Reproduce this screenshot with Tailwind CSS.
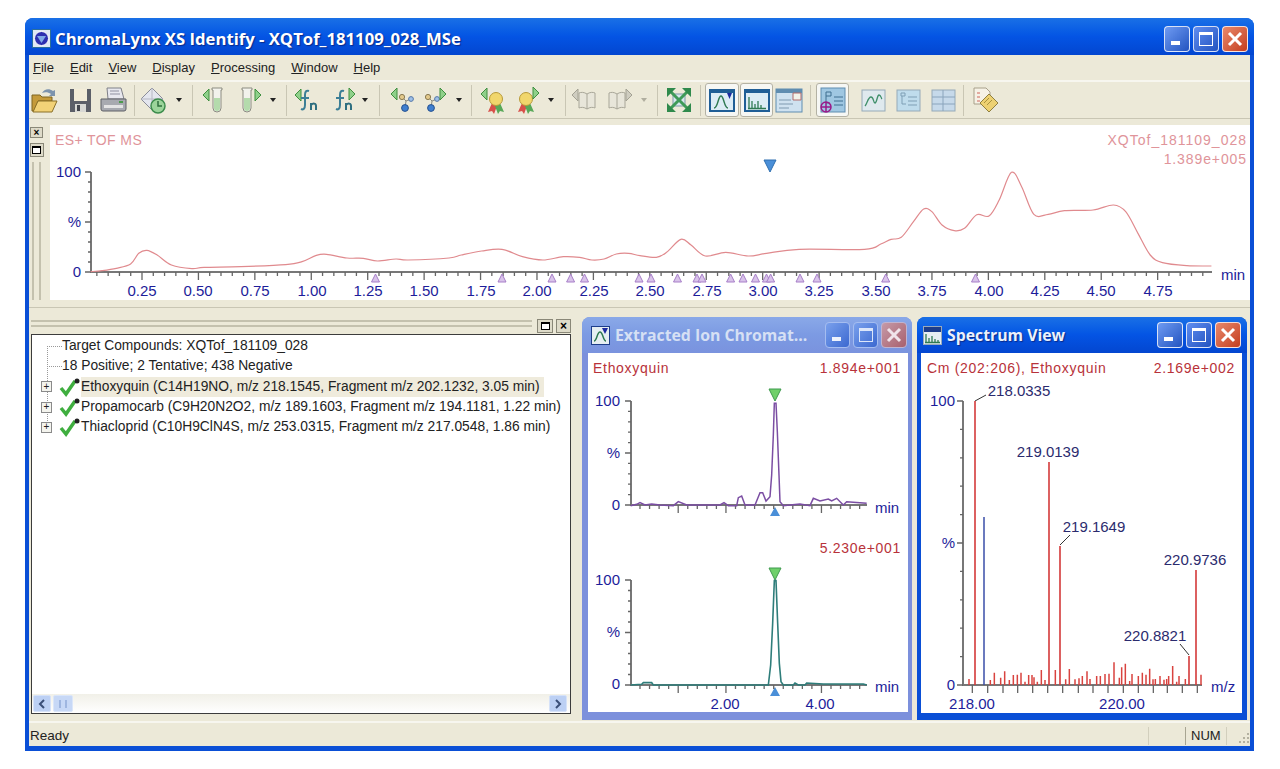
<!DOCTYPE html>
<html lang="en">
<head>
  <meta charset="UTF-8" />
  <title>ChromaLynx XS Identify</title>
  <script src="https://cdn.jsdelivr.net/npm/@tailwindcss/browser@4"></script>
</head>
<body class="bg-white font-['Liberation_Sans',sans-serif] overflow-hidden">
  <svg width="0" height="0" class="absolute">
    <defs>
      <symbol id="tri-l" viewBox="0 0 8 14"><path d="M7 1 1 7l6 6z" fill="#8fd08a" stroke="#3f8f3f"/></symbol>
      <symbol id="tri-r" viewBox="0 0 8 14"><path d="M1 1l6 6-6 6z" fill="#8fd08a" stroke="#3f8f3f"/></symbol>
      <symbol id="tri-g" viewBox="0 0 8 14"><path d="M7 1 1 7l6 6z" fill="#cfcdc0" stroke="#a3a193"/></symbol>
      <symbol id="vial" viewBox="0 0 14 26"><path d="M2 1h10v2h-1v18a4 4 0 0 1-8 0V3H2z" fill="#f2f2ec" stroke="#8b8b80"/><path d="M4 11h6v10a3 3 0 0 1-6 0z" fill="#b4dbac"/></symbol>
      <symbol id="mol" viewBox="0 0 18 20"><path d="M5 5 9 9l5-2M9 9l-1 7" stroke="#8a8a80" fill="none"/><circle cx="5" cy="5" r="2.6" fill="#e3c98b" stroke="#8a7a50"/><circle cx="14" cy="7" r="2.4" fill="#9fc0e8" stroke="#5578a8"/><circle cx="8" cy="16" r="3.4" fill="#3f7fd0" stroke="#27528f"/></symbol>
      <symbol id="award" viewBox="0 0 20 24"><path d="M6 12 2 21l4-1 2 3 3-8z" fill="#d8504a"/><path d="M14 12l4 9-4-1-2 3-3-8z" fill="#58a858"/><circle cx="10" cy="8" r="6.5" fill="#f1d66c" stroke="#b89a3a"/></symbol>
      <symbol id="book" viewBox="0 0 20 22"><path d="M10 4C7 2 4 2 2 3v15c2-1 5-1 8 1 3-2 6-2 8-1V3c-2-1-5-1-8 1z" fill="#e8e6da" stroke="#a8a698"/><path d="M10 4v15" stroke="#a8a698"/></symbol>
    </defs>
  </svg>

  <div class="ml-[25px] mt-[18px] w-[1229px] h-[733px] flex flex-col rounded-t-lg bg-[#0a4fd6] overflow-hidden">
    <!-- title bar -->
    <div class="h-[37px] shrink-0 flex items-center pt-[4px] pl-[7px] pr-[6px] bg-linear-to-b from-[#1a70e6] via-[#0454e4] to-[#0346d0]">
      <svg class="w-[19px] h-[19px] shrink-0" viewBox="0 0 19 19"><rect x=".5" y=".5" width="18" height="18" fill="#dfe8f4" stroke="#2c6f9a"/><circle cx="9.5" cy="9.5" r="7" fill="#2d2fb0" stroke="#fff"/><path d="M5 7h9l-4.500 7z" fill="#7fa8e8"/></svg>
      <span class="ml-[4px] text-white font-bold text-[16.700px] font-['Open_Sans',sans-serif] whitespace-nowrap [text-shadow:1px_1px_1px_#0a2a8a]">ChromaLynx XS Identify - XQTof_181109_028_MSe</span>
      <div class="ml-auto flex gap-[3px]">
        <div class="w-[26px] h-[26px] rounded-[4px] border border-white/80 bg-linear-to-br from-[#6f9bf2] to-[#2353c0] flex items-end pl-[6px] pb-[6px]"><div class="w-[9px] h-[4px] bg-white"></div></div>
        <div class="w-[26px] h-[26px] rounded-[4px] border border-white/80 bg-linear-to-br from-[#5f8df0] to-[#2353c0] flex items-center justify-center"><div class="w-[14px] h-[14px] border border-white border-t-[3px]"></div></div>
        <div class="w-[26px] h-[26px] rounded-[4px] border border-white/80 bg-linear-to-br from-[#e8886a] to-[#c43c1c] flex items-center justify-center text-white"><svg class="w-[16px] h-[16px]" viewBox="0 0 16 16"><path d="M2 2l12 12M14 2 2 14" stroke="#fff" stroke-width="3"/></svg></div>
      </div>
    </div>

    <div class="mx-[4px] flex-1 flex flex-col bg-[#ece9d8] text-black min-h-0">
      <!-- menu -->
      <div class="h-[27px] shrink-0 flex items-center pt-[1px] pl-[4px] gap-[16px] text-[13px] text-[#222] border-b-2 border-[#f7f6ef]">
        <span><u>F</u>ile</span><span><u>E</u>dit</span><span><u>V</u>iew</span><span><u>D</u>isplay</span><span><u>P</u>rocessing</span><span><u>W</u>indow</span><span><u>H</u>elp</span>
      </div>

      <!-- toolbar -->
      <div class="h-[37px] shrink-0 flex items-center border-b border-[#c9c6b4]">
        <svg class="w-[30px] h-[30px]" viewBox="0 0 30 30"><path d="M3 10h8l2 2h10v4H9l-4 10H3z" fill="#c49a3a" stroke="#7f6420"/><path d="M9 16h19l-5 11H4z" fill="#f2d277" stroke="#8a7028"/><path d="M13 8c2-4 7-5 11-2l2-1v6h-6l2-2c-3-2-6-2-9-1z" fill="#7c93ad"/></svg>
        <svg class="ml-[6px] w-[30px] h-[30px]" viewBox="0 0 30 30"><rect x="5" y="4" width="21" height="23" fill="#5c5f68"/><rect x="9" y="4" width="13" height="12" fill="#f3ecd8"/><rect x="10" y="19" width="11" height="8" fill="#d8d8d4"/><rect x="12" y="20" width="3" height="6" fill="#44464e"/></svg>
        <svg class="ml-[3px] w-[30px] h-[30px]" viewBox="0 0 30 30"><path d="M9 3h14l3 11H10z" fill="#e8e8ee" stroke="#7f8088"/><path d="M12 6h9M12 9h10" stroke="#8f90a0"/><path d="M3 14h25v10a2 2 0 0 1-2 2H5a2 2 0 0 1-2-2z" fill="#a8aab0" stroke="#5f6066"/><rect x="6" y="20" width="19" height="3" fill="#e4e4e4"/><rect x="21" y="16" width="4" height="2" fill="#4c9a4c"/></svg>
        <div class="ml-[6px] w-px h-[31px] bg-[#c9c6b4]"></div>
        <svg class="ml-[4px] w-[30px] h-[30px]" viewBox="0 0 30 30"><path d="M13 3 2 14l11 11 11-11z" fill="#e4e6ee" stroke="#8a8c98"/><path d="M13 3v22M2 14h22" stroke="#b6b8c4"/><circle cx="19" cy="21" r="7" fill="#9bd49a" stroke="#3c8c4c" stroke-width="1.500"/><path d="M19 16v5h4" stroke="#2f6f3c" fill="none" stroke-width="1.500"/></svg>
        <svg class="ml-[6px] w-[8px] h-[5px]" viewBox="0 0 8 5"><path d="M1 0h6L4 4z" fill="#222"/></svg>
        <div class="ml-[9px] w-px h-[31px] bg-[#c9c6b4]"></div>
        <svg class="ml-[6px] w-[30px] h-[30px]" viewBox="0 0 30 30"><use href="#tri-l" x="3" y="3" width="8" height="14"/><use href="#vial" x="11" y="2" width="14" height="26"/></svg>
        <svg class="ml-[6px] w-[30px] h-[30px]" viewBox="0 0 30 30"><use href="#vial" x="5" y="2" width="14" height="26"/><use href="#tri-r" x="19" y="3" width="8" height="14"/></svg>
        <svg class="ml-[4px] w-[8px] h-[5px]" viewBox="0 0 8 5"><path d="M1 0h6L4 4z" fill="#222"/></svg>
        <div class="ml-[9px] w-px h-[31px] bg-[#c9c6b4]"></div>
        <svg class="ml-[4px] w-[30px] h-[30px]" viewBox="0 0 30 30"><use href="#tri-l" x="3" y="3" width="8" height="14"/><path d="M18 6c-3-1-4 1-4 4v10c0 4-2 5-4 4M10 13h8" fill="none" stroke="#3c7f96" stroke-width="2"/><path d="M20 25v-7m0 2c2-2 5-2 5 1v4" fill="none" stroke="#2f6f80" stroke-width="2"/></svg>
        <svg class="ml-[9px] w-[30px] h-[30px]" viewBox="0 0 30 30"><path d="M14 6c-3-1-4 1-4 4v10c0 4-2 5-4 4M6 13h8" fill="none" stroke="#3c7f96" stroke-width="2"/><path d="M16 25v-7m0 2c2-2 5-2 5 1v4" fill="none" stroke="#2f6f80" stroke-width="2"/><use href="#tri-r" x="18" y="2" width="8" height="14"/></svg>
        <svg class="ml-[1px] w-[8px] h-[5px]" viewBox="0 0 8 5"><path d="M1 0h6L4 4z" fill="#222"/></svg>
        <div class="ml-[10px] w-px h-[31px] bg-[#c9c6b4]"></div>
        <svg class="ml-[7px] w-[30px] h-[30px]" viewBox="0 0 30 30"><use href="#tri-l" x="3" y="2" width="8" height="14"/><use href="#mol" x="10" y="7" width="18" height="20"/></svg>
        <svg class="ml-[3px] w-[30px] h-[30px]" viewBox="0 0 30 30"><use href="#mol" x="3" y="7" width="18" height="20"/><use href="#tri-r" x="19" y="2" width="8" height="14"/></svg>
        <svg class="ml-[5px] w-[8px] h-[5px]" viewBox="0 0 8 5"><path d="M1 0h6L4 4z" fill="#222"/></svg>
        <div class="ml-[8px] w-px h-[31px] bg-[#c9c6b4]"></div>
        <svg class="ml-[5px] w-[30px] h-[30px]" viewBox="0 0 30 30"><use href="#tri-l" x="3" y="2" width="8" height="14"/><use href="#award" x="9" y="6" width="20" height="24"/></svg>
        <svg class="ml-[7px] w-[30px] h-[30px]" viewBox="0 0 30 30"><use href="#award" x="2" y="6" width="20" height="24"/><use href="#tri-r" x="18" y="1" width="8" height="14"/></svg>
        <svg class="ml-[3px] w-[8px] h-[5px]" viewBox="0 0 8 5"><path d="M1 0h6L4 4z" fill="#222"/></svg>
        <div class="ml-[10px] w-px h-[31px] bg-[#c9c6b4]"></div>
        <svg class="ml-[3px] w-[30px] h-[30px]" viewBox="0 0 30 30"><use href="#tri-g" x="2" y="3" width="8" height="14"/><use href="#book" x="8" y="5" width="20" height="22"/></svg>
        <svg class="ml-[6px] w-[30px] h-[30px]" viewBox="0 0 30 30"><use href="#book" x="2" y="5" width="20" height="22"/><use href="#tri-g" x="20" y="3" width="8" height="14" transform="matrix(-1 0 0 1 48 0)"/></svg>
        <svg class="ml-[5px] w-[8px] h-[5px]" viewBox="0 0 8 5"><path d="M1 0h6L4 4z" fill="#b0ae9f"/></svg>
        <div class="ml-[9px] w-px h-[31px] bg-[#c9c6b4]"></div>
        <svg class="ml-[6px] w-[30px] h-[30px]" viewBox="0 0 30 30"><rect x="9" y="9" width="12" height="12" fill="#d7e6ee" stroke="#7f9aa8"/><path d="M4 4l22 22M26 4 4 26" stroke="#3f9a58" stroke-width="3"/><path d="M3 3h9l-9 9zM27 3h-9l9 9zM3 27h9l-9-9zM27 27h-9l9-9z" fill="#2f8a4c"/></svg>
        <div class="ml-[6px] w-px h-[31px] bg-[#c9c6b4]"></div>
        <div class="ml-[4px] w-[34px] h-[34px] rounded-[3px] border border-[#b4b2a4] bg-[#f6f7f4] flex items-center justify-center">
          <svg class="w-[26px] h-[23px]" viewBox="0 0 26 23"><rect width="26" height="23" fill="#1f5e96"/><rect x="2" y="4" width="22" height="17" fill="#dcecf5"/><path d="M5 19c4 0 4-12 7-12s3 12 7 12" fill="none" stroke="#2f7a52" stroke-width="1.500"/><path d="M18 4h5l-2.500 6z" fill="#1d2aa0"/></svg>
        </div>
        <div class="ml-[1px] w-[33px] h-[34px] rounded-[3px] border border-[#b4b2a4] bg-[#f6f7f4] flex items-center justify-center">
          <svg class="w-[26px] h-[23px]" viewBox="0 0 26 23"><rect width="26" height="23" fill="#1f5e96"/><rect x="2" y="4" width="22" height="17" fill="#dcecf5"/><path d="M5 19V8M8 19v-7M11 19v-4M14 19v-7M17 19v-3M4 19.500h18" stroke="#2f7a52" stroke-width="1.300"/></svg>
        </div>
        <svg class="ml-[1px] w-[30px] h-[30px]" viewBox="0 0 30 30"><rect x="2" y="4" width="26" height="23" fill="#cfe2f0" stroke="#5f8db0"/><rect x="2" y="4" width="26" height="4" fill="#5f8db0"/><path d="M5 15h12M5 19h14M5 23h10" stroke="#7f9ab0"/><path d="M19 8h8v7h-8z" fill="#f2f2ea" stroke="#b06a6a"/></svg>
        <div class="ml-[6px] w-px h-[31px] bg-[#c9c6b4]"></div>
        <div class="ml-[5px] w-[33px] h-[34px] rounded-[3px] border border-[#b4b2a4] bg-[#f6f7f4] flex items-center justify-center">
          <svg class="w-[26px] h-[26px]" viewBox="0 0 26 26"><rect x="1" y="1" width="24" height="24" fill="#9fc7e2" stroke="#5f8db0"/><path d="M6 5h5v4H6zM6 9v7h4M14 10h9M14 14h9M14 18h9" fill="none" stroke="#3f6f90"/><circle cx="6" cy="20" r="5" fill="none" stroke="#9a1a8a" stroke-width="1.500"/><path d="M1 20h10M6 15v10" stroke="#9a1a8a" stroke-width="1.500"/></svg>
        </div>
        <svg class="ml-[9px] w-[30px] h-[30px]" viewBox="0 0 30 30"><rect x="4" y="5" width="23" height="21" fill="#dfe9ee" stroke="#95aab8"/><path d="M7 21c2-2 3-9 6-9s2 6 4 6 2-8 4-8 2 3 3 4" fill="none" stroke="#3f8f6a" stroke-width="1.300"/></svg>
        <svg class="ml-[5px] w-[30px] h-[30px]" viewBox="0 0 30 30"><rect x="4" y="5" width="23" height="21" fill="#bfdcec" stroke="#95aab8"/><path d="M8 8h4v3H8zM9 11v8h4M15 12h9M15 16h9M15 20h9" fill="none" stroke="#7f9fb5"/></svg>
        <svg class="ml-[5px] w-[30px] h-[30px]" viewBox="0 0 30 30"><rect x="4" y="5" width="23" height="21" fill="#c6d9ea" stroke="#95aab8"/><path d="M4 12h23M4 19h23M15 5v21" stroke="#8aa4bc"/></svg>
        <div class="ml-[5px] w-px h-[31px] bg-[#c9c6b4]"></div>
        <svg class="ml-[6px] w-[30px] h-[30px]" viewBox="0 0 30 30"><path d="M4 3h12l4 4v12H4z" fill="#f6f2e6" stroke="#a8a08a"/><path d="M7 8h3M7 12h3M7 16h3" stroke="#d0645a"/><path d="M10 18 19 9l9 9-9 9z" fill="#edd172" stroke="#8f7f3f"/><path d="M14 18l5-5M17 20l5-5" stroke="#a8923f"/></svg>
      </div>

      <!-- total ion chromatogram -->
      <div class="h-[181px] shrink-0 flex pt-[6px]">
        <div class="w-[21px] flex flex-col items-center pr-[6px] pt-[2px]">
          <div class="w-[13px] h-[11px] border border-[#8a8878] bg-[#dedbc9] flex items-center justify-center text-[10px] leading-none font-bold">×</div>
          <div class="mt-[5px] w-[14px] h-[14px] border border-[#8a8878] bg-[#dedbc9] flex items-center justify-center"><div class="w-[9px] h-[8px] border border-black border-t-2 bg-white"></div></div>
          <div class="mt-[5px] w-[9px] flex-1 border-x-2 border-[#c4c1ae]"></div>
        </div>
        <svg id="top" class="w-[1200px] h-[175px] bg-white" viewBox="50 125 1200 175">
          <g class="text-[14px] fill-[#e0949a]">
            <text x="55" y="145" class="tracking-[0.4px]">ES+ TOF MS</text>
            <text x="1247" y="145" text-anchor="end" class="tracking-[1px]">XQTof_181109_028</text>
            <text x="1247" y="164" text-anchor="end" class="tracking-[0.9px]">1.389e+005</text>
          </g>
          <path d="M764 160h12l-6 12z" fill="#4a8fd8" stroke="#2f6fb0"/>
          <g class="text-[15px] fill-[#1d1d9a]" text-anchor="middle">
            <text x="81" y="177" text-anchor="end">100</text><text x="81" y="227" text-anchor="end">%</text><text x="81" y="277" text-anchor="end">0</text>
            <text x="142" y="296">0.25</text><text x="198" y="296">0.50</text><text x="255" y="296">0.75</text><text x="312" y="296">1.00</text><text x="368" y="296">1.25</text><text x="424" y="296">1.50</text><text x="481" y="296">1.75</text><text x="537" y="296">2.00</text><text x="594" y="296">2.25</text><text x="650" y="296">2.50</text><text x="707" y="296">2.75</text><text x="763" y="296">3.00</text><text x="819" y="296">3.25</text><text x="876" y="296">3.50</text><text x="932" y="296">3.75</text><text x="989" y="296">4.00</text><text x="1045" y="296">4.25</text><text x="1101" y="296">4.50</text><text x="1158" y="296">4.75</text>
            <text x="1233" y="280">min</text>
          </g>
        </svg>
      </div>
      <div class="h-[8px] shrink-0 border-b border-[#c9c6b4]"></div>

      <!-- lower row -->
      <div class="h-[413px] shrink-0 flex">
        <div class="w-[553px] shrink-0 flex flex-col pl-[2px] pr-[11px]">
          <div class="h-[26px] shrink-0 flex items-end gap-[3px] pb-[1px]">
            <div class="flex-1 h-[7px] mb-[6px] border-y-2 border-[#c4c1ae]"></div>
            <div class="ml-[2px] w-[16px] h-[14px] border border-[#8a8878] bg-[#dedbc9] flex items-center justify-center"><div class="w-[9px] h-[8px] border border-black border-t-2 bg-white"></div></div>
            <div class="w-[15px] h-[14px] border border-[#8a8878] bg-[#dedbc9] flex items-center justify-center text-[12px] leading-none font-bold">×</div>
          </div>
          <div class="h-[380px] shrink-0 flex flex-col border border-[#3c3c3c] bg-white">
            <div class="relative flex-1 pt-[1px] text-[13.800px] text-[#222] whitespace-nowrap">
              <div class="absolute left-[15px] top-[11px] h-[81px] border-l border-dotted border-[#999]"></div>
              <div class="h-[20px] flex items-center"><div class="ml-[15px] w-[15px] border-t border-dotted border-[#999]"></div><span>Target Compounds: XQTof_181109_028</span></div>
              <div class="h-[20px] flex items-center"><div class="ml-[15px] w-[15px] border-t border-dotted border-[#999]"></div><span>18 Positive; 2 Tentative; 438 Negative</span></div>
              <div class="h-[21px] flex items-center pl-[9px]">
                <div class="relative w-[11px] h-[11px] border border-[#8a8a8a] flex items-center justify-center bg-[#f4f4ee] text-[10px] leading-none">+</div>
                <svg class="ml-[7px] w-[22px] h-[20px] shrink-0" viewBox="0 0 22 20"><path d="M2 11l5 6L16 4" fill="none" stroke="#3fae3f" stroke-width="3.500"/><circle cx="18" cy="4" r="2.500" fill="#222"/></svg>
                <span class="bg-[#efebdc] h-[20px] leading-[20px] pr-[4px]">Ethoxyquin (C14H19NO, m/z 218.1545, Fragment m/z 202.1232, 3.05 min)</span>
              </div>
              <div class="h-[20px] flex items-center pl-[9px]">
                <div class="relative w-[11px] h-[11px] border border-[#8a8a8a] flex items-center justify-center bg-[#f4f4ee] text-[10px] leading-none">+</div>
                <svg class="ml-[7px] w-[22px] h-[20px] shrink-0" viewBox="0 0 22 20"><path d="M2 11l5 6L16 4" fill="none" stroke="#3fae3f" stroke-width="3.500"/><circle cx="18" cy="4" r="2.500" fill="#222"/></svg>
                <span>Propamocarb (C9H20N2O2, m/z 189.1603, Fragment m/z 194.1181, 1.22 min)</span>
              </div>
              <div class="h-[20px] flex items-center pl-[9px]">
                <div class="relative w-[11px] h-[11px] border border-[#8a8a8a] flex items-center justify-center bg-[#f4f4ee] text-[10px] leading-none">+</div>
                <svg class="ml-[7px] w-[22px] h-[20px] shrink-0" viewBox="0 0 22 20"><path d="M2 11l5 6L16 4" fill="none" stroke="#3fae3f" stroke-width="3.500"/><circle cx="18" cy="4" r="2.500" fill="#222"/></svg>
                <span>Thiacloprid (C10H9ClN4S, m/z 253.0315, Fragment m/z 217.0548, 1.86 min)</span>
              </div>
            </div>
            <!-- scrollbar -->
            <div class="h-[19px] shrink-0 flex items-center pl-[1px] pr-[3px] gap-[2px] bg-linear-to-b from-[#f1f0e8] to-white">
              <div class="w-[18px] h-[17px] rounded-[2px] bg-[#bcd0f4] border border-[#d6e2f8] flex items-center justify-center"><svg class="w-[8px] h-[10px]" viewBox="0 0 8 10"><path d="M6 1 2 5l4 4" fill="none" stroke="#3a4f78" stroke-width="2"/></svg></div>
              <div class="w-[20px] h-[17px] rounded-[2px] bg-[#c7d8f6] border border-[#dbe6f9] flex items-center justify-center"><div class="w-[8px] h-[8px] border-x-2 border-[#9fb6e0]"></div></div>
              <div class="ml-auto w-[18px] h-[17px] rounded-[2px] bg-[#bcd0f4] border border-[#d6e2f8] flex items-center justify-center"><svg class="w-[8px] h-[10px]" viewBox="0 0 8 10"><path d="M2 1l4 4-4 4" fill="none" stroke="#3a4f78" stroke-width="2"/></svg></div>
            </div>
          </div>
        </div>

        <!-- extracted ion chromatogram window -->
        <div class="mt-[9px] w-[330px] h-[403px] shrink-0 flex flex-col rounded-t-lg bg-[#7c90dc] overflow-hidden">
          <div class="h-[36px] shrink-0 flex items-center pl-[9px] pr-[5px] bg-linear-to-b from-[#8aa9e8] via-[#7c9ae3] to-[#7a93de]">
            <svg class="w-[19px] h-[19px] shrink-0" viewBox="0 0 19 19"><rect x=".5" y=".5" width="18" height="18" fill="#e6eef2" stroke="#1d3d8a"/><path d="M3 15c3 0 3-9 6-9s3 9 6 9" fill="none" stroke="#2f7a52" stroke-width="1.500"/><path d="M11 2h6l-3 6z" fill="#1d2aa0"/></svg>
            <span class="ml-[5px] mt-[2px] text-[#d6e0f4] font-bold text-[15.800px] font-['Open_Sans',sans-serif] whitespace-nowrap">Extracted Ion Chromat...</span>
            <div class="ml-auto flex gap-[3px]">
              <div class="w-[25px] h-[26px] rounded-[4px] border border-[#a5bdf0] bg-linear-to-br from-[#7aa0ec] to-[#3c68d0] flex items-end pl-[6px] pb-[6px]"><div class="w-[9px] h-[4px] bg-white/90"></div></div>
              <div class="w-[25px] h-[26px] rounded-[4px] border border-[#a5bdf0] bg-linear-to-br from-[#7aa0ec] to-[#3c68d0] flex items-center justify-center"><div class="w-[14px] h-[14px] border border-[#dce6fa] border-t-[3px]"></div></div>
              <div class="w-[26px] h-[26px] rounded-[4px] border border-[#c0b4d0] bg-linear-to-br from-[#c59aa8] to-[#a8606e] flex items-center justify-center"><svg class="w-[16px] h-[16px]" viewBox="0 0 16 16"><path d="M2 2l12 12M14 2 2 14" stroke="#f0e4ea" stroke-width="3"/></svg></div>
            </div>
          </div>
          <svg id="xic" class="ml-[6px] w-[320px] h-[359px] bg-white" viewBox="588 353 320 359">
            <g class="text-[14px] fill-[#b8323a] tracking-[0.7px]">
              <text x="593" y="373">Ethoxyquin</text>
              <text x="901" y="373" text-anchor="end">1.894e+001</text>
              <text x="901" y="553" text-anchor="end">5.230e+001</text>
            </g>
            <g class="text-[15px] fill-[#1d1d9a]">
              <text x="620" y="406" text-anchor="end">100</text><text x="620" y="458" text-anchor="end">%</text><text x="620" y="510" text-anchor="end">0</text>
              <text x="875" y="513">min</text>
              <text x="620" y="585" text-anchor="end">100</text><text x="620" y="637" text-anchor="end">%</text><text x="620" y="689" text-anchor="end">0</text>
              <text x="875" y="692">min</text>
              <text x="725" y="709" text-anchor="middle">2.00</text><text x="820" y="709" text-anchor="middle">4.00</text>
            </g>
            <path d="M769 389h12l-6 12z" fill="#6fd06a" stroke="#3f9a4f"/>
            <path d="M769 568h12l-6 12z" fill="#6fd06a" stroke="#3f9a4f"/>
            <path d="M770 516h10l-5-9z" fill="#4a8fd8"/>
            <path d="M770 696h10l-5-9z" fill="#4a8fd8"/>
          </svg>
        </div>

        <!-- spectrum window -->
        <div class="ml-[5px] mt-[9px] w-[330px] h-[403px] shrink-0 flex flex-col rounded-t-lg bg-[#0a4fd6] overflow-hidden">
          <div class="h-[36px] shrink-0 flex items-center pl-[6px] pr-[6px] bg-linear-to-b from-[#1a70e6] via-[#0454e4] to-[#0346d0]">
            <svg class="w-[19px] h-[19px] shrink-0" viewBox="0 0 19 19"><rect x=".5" y=".5" width="18" height="18" fill="#e6eef2" stroke="#9ab"/><rect x="1" y="1" width="17" height="5" fill="#1d3d8a"/><path d="M3 16V8M6 16v-4M9 16v-6M12 16v-3M15 16v-2M2 16.500h15" stroke="#2f7a52" stroke-width="1.300"/></svg>
            <span class="ml-[5px] mt-[2px] text-[#eaf1fc] font-bold text-[15.800px] font-['Open_Sans',sans-serif] whitespace-nowrap [text-shadow:1px_1px_1px_#0a2a8a]">Spectrum View</span>
            <div class="ml-auto flex gap-[3px]">
              <div class="w-[26px] h-[26px] rounded-[4px] border border-white/80 bg-linear-to-br from-[#6f9bf2] to-[#2353c0] flex items-end pl-[6px] pb-[6px]"><div class="w-[9px] h-[4px] bg-white"></div></div>
              <div class="w-[26px] h-[26px] rounded-[4px] border border-white/80 bg-linear-to-br from-[#5f8df0] to-[#2353c0] flex items-center justify-center"><div class="w-[14px] h-[14px] border border-white border-t-[3px]"></div></div>
              <div class="w-[26px] h-[26px] rounded-[4px] border border-white/80 bg-linear-to-br from-[#e8886a] to-[#c43c1c] flex items-center justify-center"><svg class="w-[16px] h-[16px]" viewBox="0 0 16 16"><path d="M2 2l12 12M14 2 2 14" stroke="#fff" stroke-width="3"/></svg></div>
            </div>
          </div>
          <svg id="spec" class="ml-[4px] w-[321px] h-[360px] bg-white" viewBox="921 353 321 360">
            <g class="text-[14px] fill-[#b8323a] tracking-[0.7px]">
              <text x="927" y="373">Cm (202:206), Ethoxyquin</text>
              <text x="1235" y="373" text-anchor="end">2.169e+002</text>
            </g>
            <g class="text-[15px] fill-[#2b2b6e]" text-anchor="middle">
              <text x="1019" y="396">218.0335</text><text x="1048" y="457">219.0139</text><text x="1094" y="532">219.1649</text><text x="1195" y="565">220.9736</text><text x="1155" y="641">220.8821</text>
            </g>
            <g class="text-[15px] fill-[#1d1d9a]">
              <text x="955" y="406" text-anchor="end">100</text><text x="955" y="548" text-anchor="end">%</text><text x="955" y="690" text-anchor="end">0</text>
              <text x="1211" y="692">m/z</text>
              <text x="972" y="709" text-anchor="middle">218.00</text><text x="1122" y="709" text-anchor="middle">220.00</text>
            </g>
            <path d="M975 401l11-6M1060 545l10-10M1180 644l9 11" stroke="#333" fill="none"/>
          </svg>
        </div>
      </div>

      <!-- status bar -->
      <div class="flex-1 flex items-center pl-[1px] pt-[3px] text-[13.500px] text-[#222] border-t-2 border-[#f7f6ef] min-h-0">
        <span>Ready</span>
        <div class="ml-auto w-px h-[18px] bg-[#d2cfbd]"></div>
        <div class="ml-[36px] w-px h-[18px] bg-[#a8a592]"></div>
        <span class="ml-[5px] w-[35px] text-[13px]">NUM</span>
        <div class="w-px h-[18px] bg-[#d2cfbd]"></div>
        <svg class="ml-[9px] w-[14px] h-[14px] mt-[4px]" viewBox="0 0 14 14"><path d="M11 2h2v2h-2zM7 6h2v2H7zM11 6h2v2h-2zM3 10h2v2H3zM7 10h2v2H7zM11 10h2v2h-2z" fill="#b4b1a0"/></svg>
      </div>
    </div>
    <div class="h-[5px] shrink-0"></div>
  </div>

  <script>
    // chart strokes: traces read off the plots, ticks from the axis ranges
    const NS = "http://www.w3.org/2000/svg";
    function draw(id, d, stroke, width) {
      const p = document.createElementNS(NS, "path");
      p.setAttribute("d", d);
      p.setAttribute("fill", "none");
      p.setAttribute("stroke", stroke);
      p.setAttribute("stroke-width", width);
      document.getElementById(id).appendChild(p);
      return p;
    }
    const poly = pts => "M" + pts.map(p => p.join(" ")).join("L");

    // catmull-rom through the points, the big trace is a smooth curve
    function smooth(pts) {
      let d = `M${pts[0][0]} ${pts[0][1]}`;
      for (let i = 0; i < pts.length - 1; i++) {
        const a = pts[Math.max(i - 1, 0)], b = pts[i], c = pts[i + 1], e = pts[Math.min(i + 2, pts.length - 1)];
        d += `C${b[0] + (c[0] - a[0]) / 6} ${b[1] + (c[1] - a[1]) / 6} ${c[0] - (e[0] - b[0]) / 6} ${c[1] - (e[1] - b[1]) / 6} ${c[0]} ${c[1]}`;
      }
      return d;
    }

    function axes(id, x0, yTop, y0, xEnd, xTicks) {
      draw(id, `M${x0} ${yTop}V${y0}H${xEnd}`, "#777", 2);
      let t = "";
      for (let i = 0; i <= 10; i++) {
        const y = yTop + (y0 - yTop) * i / 10;
        t += `M${x0} ${y}h-${i % 5 === 0 ? 6 : 3}`;
      }
      xTicks.forEach(([x, major]) => { t += `M${x} ${y0}v${major ? 8 : 4}`; });
      draw(id, t, "#666", 1.3);
    }

    // top plot
    const topPts = [
      ...[[222,455],[250,452],[285,445],[320,432],[340,400],[360,391],[385,405],[420,435],[470,446],[500,442],[590,440],[700,434],[740,425],[775,406],[800,403],[850,414],[890,415],[925,423],[970,417],[1000,420],[1100,414],[1130,405],[1180,393],[1230,388],[1280,410],[1330,420],[1380,410],[1420,412],[1450,420],[1480,417],[1510,402],[1540,400]].map(([x,y]) => [x/2.45, 120+y/3]),
      ...[[0,407],[40,412],[65,397],[100,358],[125,375],[160,408],[210,397],[265,408],[310,400],[390,388],[550,388],[590,372],[615,358],[640,352],[670,305],[695,267],[715,275],[740,315],[770,332],[795,325],[825,284],[855,288],[880,240],[910,157],[935,200],[965,283],[1000,283],[1040,272],[1110,270],[1160,255],[1190,275],[1220,340],[1250,405],[1280,428],[1340,437],[1400,438]].map(([x,y]) => [640+x/2.45, 120+y/3])
    ];
    const topTicks = [];
    for (let i = 1; i < 100; i++) {
      const x = 142 + (i * 0.05 - 0.25) * 225.7;
      if (x < 1212) topTicks.push([x, i % 5 === 0]);
    }
    axes("top", 91, 172, 272, 1212, topTicks);
    draw("top", smooth(topPts), "#e08a8e", 1.2);
    [375.5,502,552,570.6,584.5,639,651,677.5,697,702,730.6,743,755.5,766.5,770.6,800,817,885.7,975.5].forEach(x => {
      draw("top", `M${x-4} 282h8l-4-8z`, "#a77fc8", 1).setAttribute("fill", "#d9c3ea");
    });

    // XIC plots
    const xicTicks = () => { const a = []; for (let x = 640; x < 868; x += 9.55) a.push([x, Math.abs(x - 678) < 4 || Math.abs(x - 725) < 4 || Math.abs(x - 821) < 4]); return a; };
    axes("xic", 631, 401, 505, 867, xicTicks());
    axes("xic", 631, 580, 685, 867, xicTicks());
    const z6 = ([x,y]) => [580+x/3, 315+y/3];
    const z7 = ([x,y]) => [580+x/3, 530+y/3];
    draw("xic", poly([[152,572],[170,568],[180,563],[195,570],[215,567],[240,570],[280,572],[295,560],[320,570],[420,570],[432,563],[445,572],[470,572],[475,548],[485,543],[495,570],[525,570],[540,533],[548,533],[558,558],[570,545],[575,480],[580,360],[583,265],[588,265],[592,350],[597,480],[600,560],[610,572],[630,570],[660,567],[690,572],[700,550],[720,558],[745,552],[755,558],[770,550],[790,570],[800,560],[860,565]].map(z6)), "#7b4ea3", 1.5);
    draw("xic", poly([[152,465],[185,463],[190,458],[215,458],[220,465],[565,465],[572,405],[578,280],[583,152],[588,152],[593,280],[598,400],[603,455],[610,465],[640,465],[645,459],[655,465],[675,465],[680,459],[730,462],[850,462],[860,465]].map(z7)), "#2e7d7a", 1.6);

    // spectrum
    const specTicks = [187,233,279,323,368,413,458,505,549,594,640,685,730,772,817,862].map(x => [910+x/3, true]);
    axes("spec", 963, 401, 685, 1202, specTicks);
    let peaks = "";
    [[177,447],[241,450],[253,428],[272,443],[284,424],[298,450],[310,435],[322,434],[333,428],[345,455],[356,435],[366,435],[372,442],[382,455],[394,420],[405,450],[436,420],[467,448],[478,417],[495,448],[507,445],[517,438],[531,424],[540,447],[560,438],[571,438],[585,432],[597,431],[612,397],[628,443],[635,412],[646,401],[659,453],[666,432],[685,438],[697,428],[708,434],[719,416],[729,448],[736,447],[750,438],[762,449],[770,447],[776,438],[788,408],[800,455],[807,438],[826,447],[873,434]].forEach(([x,y]) => {
      peaks += `M${910+x/3} 685V${530+y/3}`;
    });
    draw("spec", peaks, "#d9433f", 1.5);
    draw("spec", "M975 685V401M1049 685V462M1060 685V546M1196 685V570M1189 685V656", "#d43a3a", 1.6);
    draw("spec", "M984 685V517", "#3a4ea8", 1.5);
  </script>
</body>
</html>
